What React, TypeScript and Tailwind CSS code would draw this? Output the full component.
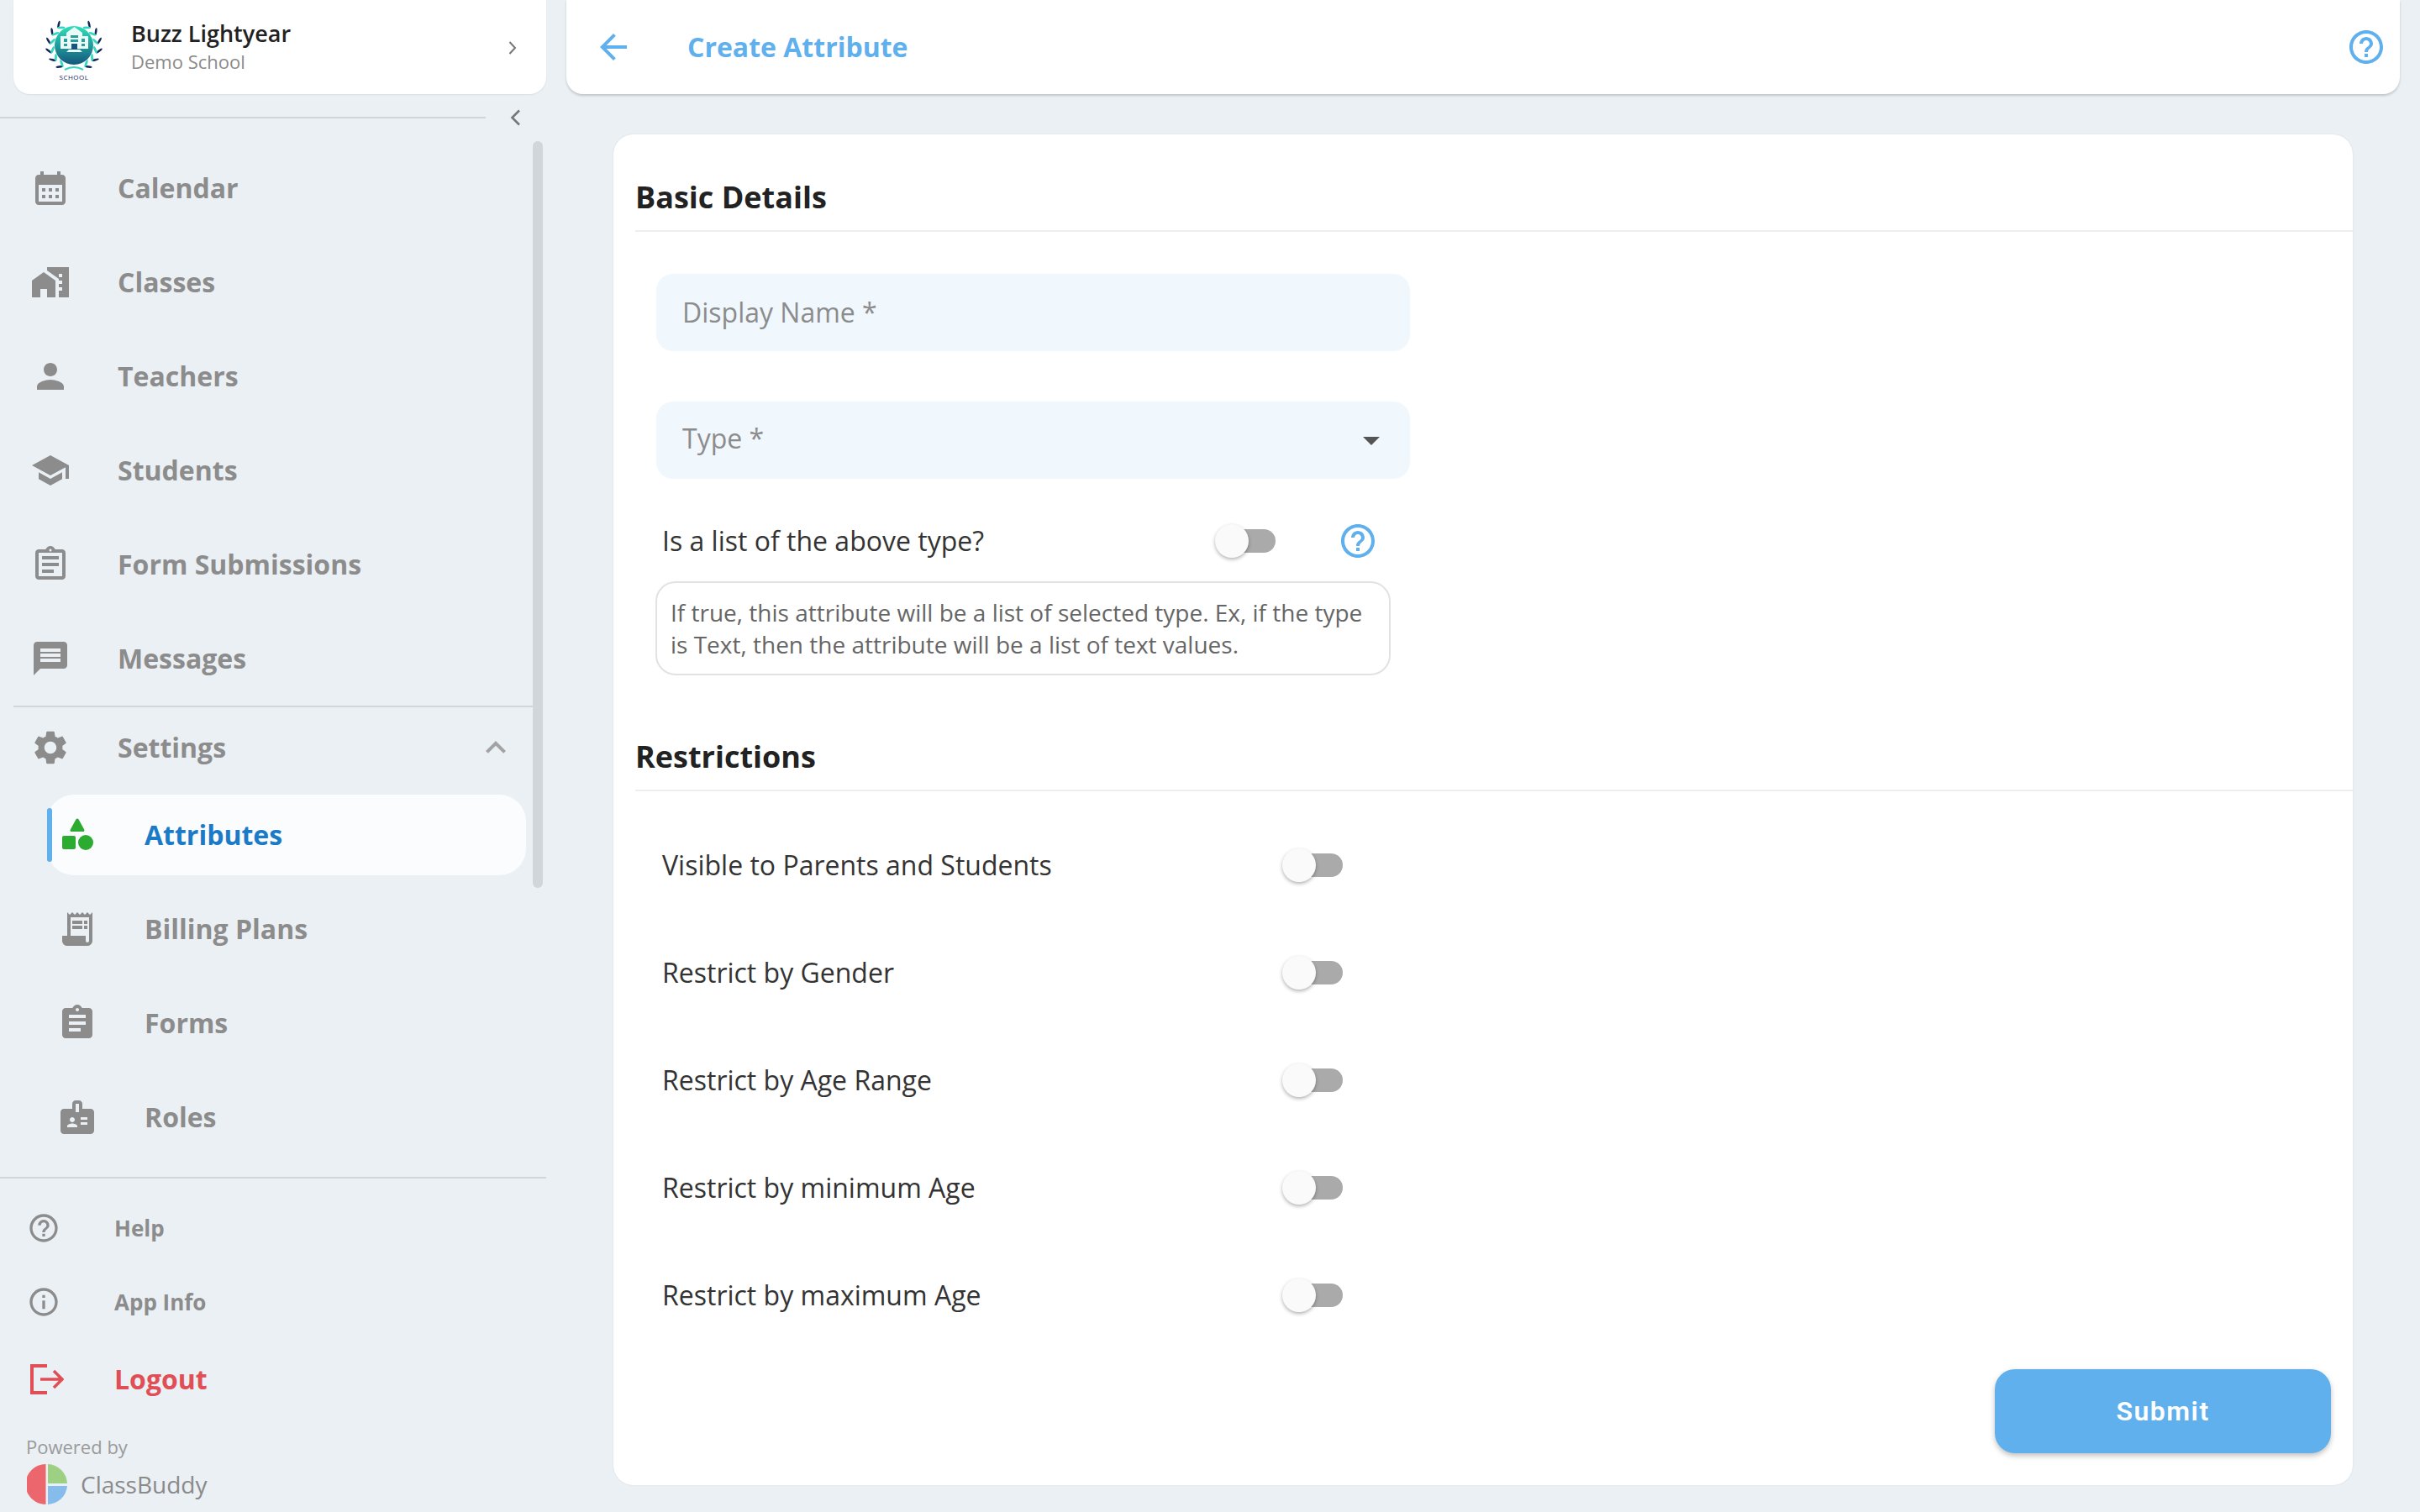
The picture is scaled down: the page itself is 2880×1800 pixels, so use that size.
import type { ReactNode } from "react"

const icons: Record<string, ReactNode> = {
    calendar: <path d="M19 4h-1V2h-2v2H8V2H6v2H5c-1.11 0-1.99.9-1.99 2L3 20c0 1.1.89 2 2 2h14c1.1 0 2-.9 2-2V6c0-1.1-.9-2-2-2zm0 16H5V10h14v10zM9 14H7v-2h2v2zm4 0h-2v-2h2v2zm4 0h-2v-2h2v2zm-8 4H7v-2h2v2zm4 0h-2v-2h2v2zm4 0h-2v-2h2v2z" />,
    classes: <path d="M17 11h2v2h-2v2h2v2h-2v4h6V3H10v1.97L17 9.97V11zm0-4h2v2h-2V7zM1 11v10h5v-5h4v5h5V11L8 6z" />,
    person: <path d="M12 12c2.21 0 4-1.79 4-4s-1.79-4-4-4-4 1.79-4 4 1.79 4 4 4zm0 2c-2.67 0-8 1.34-8 4v2h16v-2c0-2.66-5.33-4-8-4z" />,
    school: <path d="M5 13.18v4L12 21l7-3.82v-4L12 17l-7-3.82zM12 3 1 9l11 6 9-4.91V17h2V9L12 3z" />,
    assignmentOutline: <path d="M7 15h7v2H7zM7 11h10v2H7zM7 7h10v2H7zM19 3h-4.18C14.4 1.84 13.3 1 12 1s-2.4.84-2.82 2H5c-1.1 0-2 .9-2 2v14c0 1.1.9 2 2 2h14c1.1 0 2-.9 2-2V5c0-1.1-.9-2-2-2zm-7-.25c.41 0 .75.34.75.75s-.34.75-.75.75-.75-.34-.75-.75.34-.75.75-.75zM19 19H5V5h14v14z" />,
    message: <path d="M20 2H4c-1.1 0-1.99.9-1.99 2L2 22l4-4h14c1.1 0 2-.9 2-2V4c0-1.1-.9-2-2-2zm-2 12H6v-2h12v2zm0-3H6V9h12v2zm0-3H6V6h12v2z" />,
    settings: <path d="M19.14 12.94c.04-.3.06-.61.06-.94 0-.32-.02-.64-.07-.94l2.03-1.58c.18-.14.23-.41.12-.61l-1.92-3.32c-.12-.22-.37-.29-.59-.22l-2.39.96c-.5-.38-1.03-.7-1.62-.94l-.36-2.54c-.04-.24-.24-.41-.48-.41h-3.84c-.24 0-.43.17-.47.41l-.36 2.54c-.59.24-1.13.57-1.62.94l-2.39-.96c-.22-.08-.47 0-.59.22L2.74 8.87c-.12.21-.08.47.12.61l2.03 1.58c-.05.3-.09.63-.09.94s.02.64.07.94l-2.03 1.58c-.18.14-.23.41-.12.61l1.92 3.32c.12.22.37.29.59.22l2.39-.96c.5.38 1.03.7 1.62.94l.36 2.54c.05.24.24.41.48.41h3.84c.24 0 .44-.17.47-.41l.36-2.54c.59-.24 1.13-.56 1.62-.94l2.39.96c.22.08.47 0 .59-.22l1.92-3.32c.12-.22.07-.47-.12-.61l-2.01-1.58zM12 15.6c-1.98 0-3.6-1.62-3.6-3.6s1.62-3.6 3.6-3.6 3.6 1.62 3.6 3.6-1.62 3.6-3.6 3.6z" />,
    shapes: (
        <>
            <path d="M12 2.2c.3 0 .6.15.75.42l3.4 6.2c.3.55-.1 1.18-.72 1.18H8.57c-.62 0-1.02-.63-.72-1.18l3.4-6.2c.15-.27.45-.42.75-.42z" />
            <rect x="3" y="12.5" width="8" height="8" rx="1" />
            <circle cx="17" cy="16.5" r="4.5" />
        </>
    ),
    receipt: <path d="M19.5 3.5 18 2l-1.5 1.5L15 2l-1.5 1.5L12 2l-1.5 1.5L9 2 7.5 3.5 6 2v14H3v3c0 1.66 1.34 3 3 3h12c1.66 0 3-1.34 3-3V2l-1.5 1.5zM19 19c0 .55-.45 1-1 1s-1-.45-1-1v-3H8V5h11v14zM9 7h6v2H9zM16 7h2v2h-2zM9 10h6v2H9zM16 10h2v2h-2z" />,
    assignment: <path d="M19 3h-4.18C14.4 1.84 13.3 1 12 1c-1.3 0-2.4.84-2.82 2H5c-1.1 0-2 .9-2 2v14c0 1.1.9 2 2 2h14c1.1 0 2-.9 2-2V5c0-1.1-.9-2-2-2zm-7 0c.55 0 1 .45 1 1s-.45 1-1 1-1-.45-1-1 .45-1 1-1zm2 14H7v-2h7v2zm3-4H7v-2h10v2zm0-4H7V7h10v2z" />,
    badge: <path d="M20 7h-5V4c0-1.1-.9-2-2-2h-2c-1.1 0-2 .9-2 2v3H4c-1.1 0-2 .9-2 2v11c0 1.1.9 2 2 2h16c1.1 0 2-.9 2-2V9c0-1.1-.9-2-2-2zM9 12c.83 0 1.5.67 1.5 1.5S9.83 15 9 15s-1.5-.67-1.5-1.5S8.17 12 9 12zm3 6H6v-.75c0-1 2-1.5 3-1.5s3 .5 3 1.5V18zm1-9h-2V4h2v5zm5 7.5h-4V15h4v1.5zm0-3h-4V12h4v1.5z" />,
    help: <path d="M11 18h2v-2h-2v2zm1-16C6.48 2 2 6.48 2 12s4.48 10 10 10 10-4.48 10-10S17.52 2 12 2zm0 18c-4.41 0-8-3.59-8-8s3.59-8 8-8 8 3.59 8 8-3.59 8-8 8zm0-14c-2.21 0-4 1.79-4 4h2c0-1.1.9-2 2-2s2 .9 2 2c0 2-3 1.75-3 5h2c0-2.25 3-2.5 3-5 0-2.21-1.79-4-4-4z" />,
    info: <path d="M11 7h2v2h-2zm0 4h2v6h-2zm1-9C6.48 2 2 6.48 2 12s4.48 10 10 10 10-4.48 10-10S17.52 2 12 2zm0 18c-4.41 0-8-3.59-8-8s3.59-8 8-8 8 3.59 8 8-3.59 8-8 8z" />,
    back: <path d="M20 11H7.83l5.59-5.59L12 4l-8 8 8 8 1.41-1.41L7.83 13H20v-2z" />,
    up: <path d="M12 8l-6 6 1.41 1.41L12 10.83l4.59 4.58L18 14z" />,
    down: <path d="M7 10l5 5 5-5z" />,
}

function Icon({ name, className }: { name: string; className: string }) {
    return (
        <svg viewBox="0 0 24 24" fill="currentColor" className={className}>
            {icons[name]}
        </svg>
    )
}

// school crest in the account card
function SchoolLogo() {
    const angles = [36, 58, 80, 102, 124, 146]
    return (
        <div className="flex w-[72px] flex-col items-center pt-[5px]">
            <svg viewBox="0 0 72 66" className="h-[66px] w-[72px]">
                <defs>
                    <linearGradient id="crest" x1="0" y1="0" x2="0" y2="1">
                        <stop offset="0" stopColor="#2fe0bb" />
                        <stop offset="1" stopColor="#14577c" />
                    </linearGradient>
                </defs>
                {angles.map((a) =>
                    [-1, 1].map((side) => (
                        <g key={a * side} transform={`rotate(${a * side} 36 34)`}>
                            <ellipse cx="36" cy="3.2" rx="1.3" ry="4.4" fill="#14265c" transform={`rotate(${-50 * side} 36 3.2)`} />
                            <ellipse cx="36" cy="8" rx="1.4" ry="4.6" fill="#2fd8bd" transform={`rotate(${-125 * side} 36 8)`} />
                        </g>
                    )),
                )}
                <circle cx="36" cy="34" r="23" fill="url(#crest)" />
                <path d="M36.5 12l9.5 7v4h7v15H20V23h7v-4z" fill="#eafaf7" />
                <path d="M24 26h4v4h-4zM45 26h4v4h-4zM24 32h4v3h-4zM45 32h4v3h-4zM32 22h9v3h-9zM32 27h9v3h-9z" fill="#2a9c9c" />
                <rect x="33" y="32" width="7" height="7" fill="#14577c" />
                <path d="M27 42l3-3h13l3 3z" fill="#eafaf7" />
                <path d="M25 63q11-6 22 0" fill="none" stroke="#2fd8bd" strokeWidth="2" />
            </svg>
            <span className="text-[8px] leading-[12px] tracking-[0.5px] text-[#14265c]">SCHOOL</span>
        </div>
    )
}

function NavItem({ icon, label }: { icon: string; label: string }) {
    return (
        <div className="flex h-[112px] items-center pl-[36px]">
            <Icon name={icon} className="h-[48px] w-[48px] text-[#8c8c8c]" />
            <span className="ml-[56px] text-[32px] font-bold text-[#8c8c8c]">{label}</span>
        </div>
    )
}

function SubItem({ icon, label }: { icon: string; label: string }) {
    return (
        <div className="flex h-[112px] items-center pl-[68px]">
            <Icon name={icon} className="h-[48px] w-[48px] text-[#8c8c8c]" />
            <span className="ml-[56px] text-[32px] font-bold text-[#8c8c8c]">{label}</span>
        </div>
    )
}

function Toggle() {
    return (
        <div className="relative h-[40px] w-[72px]">
            <div className="absolute top-[6px] right-0 h-[28px] w-[64px] rounded-full bg-[#aaaaaa]" />
            <div className="absolute top-0 left-0 h-[40px] w-[40px] rounded-full bg-[#fafafa] shadow-[0_2px_4px_rgba(0,0,0,0.3)]" />
        </div>
    )
}

function RestrictionRow({ label }: { label: string }) {
    return (
        <div className="flex h-[128px] items-center pl-[32px]">
            <span className="w-[738px] text-[32px] text-[#333333]">{label}</span>
            <Toggle />
        </div>
    )
}

function SectionTitle({ children }: { children: ReactNode }) {
    return (
        <div className="flex h-[60px] items-center border-b-2 border-[#eeeeee]">
            <h2 className="relative -top-[10px] text-[36px] font-bold text-[#222222]">{children}</h2>
        </div>
    )
}

export default function App() {
    const restrictions = ["Visible to Parents and Students", "Restrict by Gender", "Restrict by Age Range", "Restrict by minimum Age", "Restrict by maximum Age"]

    return (
        <div className="flex h-[1800px] w-[2880px] overflow-hidden bg-[#ebf0f4] font-['Open_Sans',sans-serif]">
            {/* Sidebar */}
            <aside className="flex w-[674px] shrink-0 flex-col">
                <div className="ml-[16px] flex h-[112px] w-[634px] items-center rounded-b-[20px] bg-white pl-[36px] shadow-[0_1px_2px_rgba(0,0,0,0.08)]">
                    <SchoolLogo />
                    <div className="ml-[32px] flex flex-col">
                        <span className="text-[27px] leading-[34px] font-semibold text-[#222222]">Buzz Lightyear</span>
                        <span className="text-[22px] leading-[32px] text-[#8a8a8a]">Demo School</span>
                    </div>
                    <svg viewBox="0 0 10 16" className="mt-[2px] ml-auto mr-[35px] h-[16px] w-[10px] text-[#777777]" fill="none" stroke="currentColor" strokeWidth="2">
                        <path d="M1.5 1l6.5 7-6.5 7" />
                    </svg>
                </div>

                <div className="flex h-[56px] items-center">
                    <div className="h-[2px] w-[578px] bg-[#d0d5d9]" />
                    <svg viewBox="0 0 13 20" className="ml-[29px] h-[20px] w-[13px] text-[#777777]" fill="none" stroke="currentColor" strokeWidth="2.6">
                        <path d="M11 1.5L2.5 10l8.5 8.5" />
                    </svg>
                </div>

                <div className="flex">
                    <div className="w-[634px]">
                        <NavItem icon="calendar" label="Calendar" />
                        <NavItem icon="classes" label="Classes" />
                        <NavItem icon="person" label="Teachers" />
                        <NavItem icon="school" label="Students" />
                        <NavItem icon="assignmentOutline" label="Form Submissions" />
                        <NavItem icon="message" label="Messages" />
                        <div className="ml-[16px] h-[2px] bg-[#d0d5d9]" />
                        <div className="flex h-[96px] items-center pl-[36px]">
                            <Icon name="settings" className="h-[48px] w-[48px] text-[#8c8c8c]" />
                            <span className="ml-[56px] text-[32px] font-bold text-[#8c8c8c]">Settings</span>
                            <Icon name="up" className="ml-auto mr-[20px] h-[48px] w-[48px] text-[#a3a3a3]" />
                        </div>
                        <div className="flex h-[112px] items-center">
                            <div className="relative ml-[56px] flex h-[96px] w-[570px] items-center rounded-[32px] bg-[#fbfcfe] pl-[12px]">
                                <div className="absolute top-[16px] left-0 h-[64px] w-[6px] rounded-full bg-[#5fb0ed]" />
                                <Icon name="shapes" className="h-[48px] w-[48px] text-[#2bab2f]" />
                                <span className="ml-[56px] text-[32px] font-bold text-[#1c7bc7]">Attributes</span>
                            </div>
                        </div>
                        <SubItem icon="receipt" label="Billing Plans" />
                        <SubItem icon="assignment" label="Forms" />
                        <SubItem icon="badge" label="Roles" />
                    </div>
                    <div className="h-[889px] w-[12px] rounded-full bg-[#d0d6da]" />
                </div>

                <div className="mt-[15px] h-[2px] w-[650px] bg-[#d0d5d9]" />
                <div className="mt-[15px] flex h-[88px] items-center pl-[32px]">
                    <Icon name="help" className="h-[40px] w-[40px] text-[#8c8c8c]" />
                    <span className="ml-[64px] text-[26px] font-bold text-[#8c8c8c]">Help</span>
                </div>
                <div className="flex h-[88px] items-center pl-[32px]">
                    <Icon name="info" className="h-[40px] w-[40px] text-[#8c8c8c]" />
                    <span className="ml-[64px] text-[26px] font-bold text-[#8c8c8c]">App Info</span>
                </div>
                <div className="flex h-[96px] items-center pl-[36px]">
                    <svg viewBox="0 0 40 36" className="h-[36px] w-[40px] text-[#e04f55]" fill="none" stroke="currentColor" strokeWidth="4">
                        <path d="M20 2H2v32h18" />
                        <path d="M12 18h26M28 8l10 10-10 10" strokeWidth="3.5" />
                    </svg>
                    <span className="ml-[60px] text-[32px] font-bold text-[#e04f55]">Logout</span>
                </div>
                <div className="mt-[16px] pl-[31px] text-[22px] leading-[32px] text-[#9a9a9a]">Powered by</div>
                <div className="mt-[5px] flex items-center pl-[32px]">
                    <svg viewBox="0 0 48 48" className="h-[48px] w-[48px]">
                        <path d="M22.5 0A24 24 0 0 0 22.5 48z" fill="#ec666d" />
                        <path d="M25 0A24 24 0 0 1 48 23H25z" fill="#9dd083" />
                        <path d="M25 26H48A24 24 0 0 1 25 48z" fill="#86bcec" />
                    </svg>
                    <span className="ml-[16px] text-[28px] text-[#8a8a8a]">ClassBuddy</span>
                </div>
            </aside>

            {/* Main */}
            <main className="flex w-[2182px] shrink-0 flex-col">
                <header className="flex h-[112px] items-center rounded-b-[20px] bg-white pl-[32px] shadow-[0_2px_3px_rgba(0,0,0,0.18)]">
                    <Icon name="back" className="h-[48px] w-[48px] text-[#5fb0ed]" />
                    <h1 className="ml-[64px] text-[32px] font-bold text-[#5fb0ed]">Create Attribute</h1>
                    <Icon name="help" className="ml-auto mr-[16px] h-[48px] w-[48px] text-[#5fb0ed]" />
                </header>

                <section className="mx-[56px] mt-[48px] h-[1608px] rounded-[24px] bg-white pt-[56px] pl-[26px] shadow-[0_0_2px_rgba(0,0,0,0.1)]">
                    <SectionTitle>Basic Details</SectionTitle>

                    <div className="mt-[50px] ml-[25px] flex h-[92px] w-[897px] items-center rounded-[20px] bg-[#f0f7fd] pl-[31px] text-[32px] text-[#8c8c8c]">
                        Display Name *
                    </div>
                    <div className="mt-[60px] ml-[25px] flex h-[92px] w-[897px] items-center rounded-[20px] bg-[#f0f7fd] pl-[31px] text-[32px] text-[#8c8c8c]">
                        <span className="relative -top-[2px]">Type *</span>
                        <Icon name="down" className="ml-auto mr-[22px] h-[48px] w-[48px] text-[#555555]" />
                    </div>

                    <div className="mt-[54px] flex h-[40px] items-center pl-[32px]">
                        <span className="w-[658px] text-[32px] text-[#333333]">Is a list of the above type?</span>
                        <Toggle />
                        <Icon name="help" className="ml-[74px] h-[48px] w-[48px] text-[#5fb0ed]" />
                    </div>

                    <div className="mt-[28px] ml-[24px] h-[112px] w-[875px] rounded-[24px] border-2 border-[#e2e2e2] px-[16px] py-[16px] text-[28px] leading-[38px] text-[#666666]">
                        If true, this attribute will be a list of selected type. Ex, if the type is Text, then the attribute will be a list of text values.
                    </div>

                    <div className="mt-[78px]">
                        <SectionTitle>Restrictions</SectionTitle>
                    </div>

                    <div className="mt-[24px]">
                        {restrictions.map((label) => (
                            <RestrictionRow key={label} label={label} />
                        ))}
                    </div>

                    <div className="flex justify-end pr-[26px]">
                        <button className="mt-[24px] h-[100px] w-[400px] rounded-[24px] bg-[#5fb0ed] font-['Roboto',sans-serif] text-[32px] font-semibold tracking-[1.5px] text-white shadow-[0_3px_6px_rgba(0,0,0,0.25)]">
                            Submit
                        </button>
                    </div>
                </section>
            </main>
        </div>
    )
}
